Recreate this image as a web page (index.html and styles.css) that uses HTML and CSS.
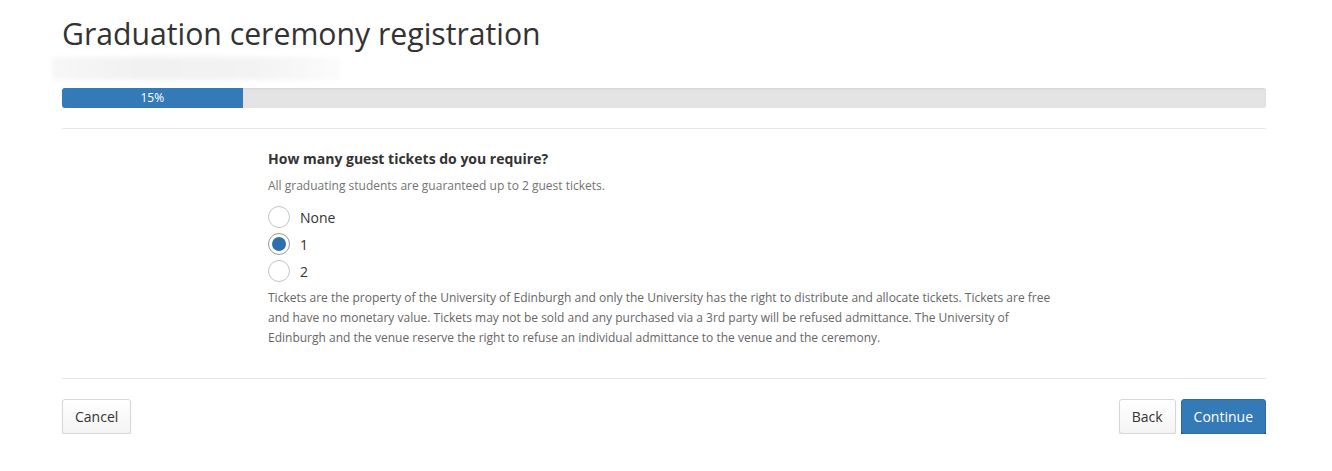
FILE: index.html
```html
<!DOCTYPE html>
<html lang="en">
<head>
<meta charset="utf-8">
<title>Graduation ceremony registration</title>
<link rel="stylesheet" href="styles.css">
</head>
<body>
<div class="page">
  <h1 class="title">Graduation ceremony registration</h1>
  <div class="redacted"></div>
  <div class="progress">
    <div class="progress-bar" style="width: 15%">15%</div>
  </div>
  <hr class="rule">
  <div class="question">
    <div class="q-label">How many guest tickets do you require?</div>
    <div class="q-help">All graduating students are guaranteed up to 2 guest tickets.</div>
    <div class="options">
      <label class="option"><span class="radio"></span><span class="opt-text">None</span></label>
      <label class="option"><span class="radio checked"></span><span class="opt-text">1</span></label>
      <label class="option"><span class="radio"></span><span class="opt-text">2</span></label>
    </div>
    <p class="note">Tickets are the property of the University of Edinburgh and only the University has the right to distribute and allocate tickets. Tickets are free and have no monetary value. Tickets may not be sold and any purchased via a 3rd party will be refused admittance. The University of Edinburgh and the venue reserve the right to refuse an individual admittance to the venue and the ceremony.</p>
  </div>
  <hr class="rule bottom">
  <div class="actions">
    <button class="btn">Cancel</button>
    <div class="right">
      <button class="btn">Back</button>
      <button class="btn primary">Continue</button>
    </div>
  </div>
</div>
</body>
</html>
```

FILE: styles.css
```css
* { box-sizing: border-box; }
html, body { margin: 0; padding: 0; background: #fff; }
body {
  font-family: "Open Sans", "Noto Sans", sans-serif;
  color: #333;
}
.page {
  width: 1204px;
  margin-left: 62px;
  padding-top: 14px;
}
.title {
  font-size: 30.2px;
  font-weight: 400;
  line-height: 40px;
  margin: 0;
  color: #333;
}
.redacted {
  width: 288px;
  height: 23px;
  margin-left: -10px;
  margin-top: 3px;
  background: linear-gradient(90deg, rgba(235,235,235,0.4), #f1f1f1 30%, #f3f3f3 70%, rgba(248,248,248,0.5));
  filter: blur(2px);
}
.progress {
  margin-top: 8px;
  height: 20px;
  background: #e4e4e4;
  border-radius: 3px;
  overflow: hidden;
  box-shadow: inset 0 1px 2px rgba(0,0,0,0.08);
}
.progress-bar {
  height: 100%;
  background: #337ab7;
  color: #fff;
  font-size: 12px;
  line-height: 20px;
  text-align: center;
}
.rule {
  border: 0;
  border-top: 1px solid #e6e6e6;
  margin: 20px 0 0;
}
.question {
  padding-left: 206px;
  padding-top: 20px;
}
.q-label {
  font-size: 14px;
  font-weight: 700;
  line-height: 20px;
  color: #333;
}
.q-help {
  margin-top: 8px;
  font-size: 12px;
  line-height: 18px;
  color: #737373;
}
.options {
  margin-top: 11px;
  display: flex;
  flex-direction: column;
  gap: 5px;
}
.option {
  display: flex;
  align-items: center;
  gap: 10px;
  height: 22px;
}
.radio {
  width: 22px;
  height: 22px;
  border-radius: 50%;
  border: 1px solid #c4c4c4;
  background: #fff;
  display: flex;
  align-items: center;
  justify-content: center;
}
.radio.checked {
  border-color: #999;
}
.radio.checked::after {
  content: "";
  width: 14px;
  height: 14px;
  border-radius: 50%;
  background: #2e6fb0;
}
.opt-text {
  font-size: 14px;
  color: #333;
}
.note {
  margin: 6px 0 0;
  width: 792px;
  font-size: 12px;
  line-height: 20px;
  color: #666;
}
.rule.bottom {
  margin-top: 30px;
}
.actions {
  margin-top: 20px;
  display: flex;
  justify-content: space-between;
  align-items: center;
}
.right { display: flex; gap: 5px; }
.btn {
  font-family: "Open Sans", "Noto Sans", sans-serif;
  font-size: 14px;
  height: 35px;
  padding: 0 12px;
  border: 1px solid #d6d6d6;
  border-radius: 3px;
  background: linear-gradient(#fff, #f4f4f4);
  color: #333;
  box-shadow: 0 2px 1px rgba(0,0,0,0.18);
}
.btn.primary {
  background: #337ab7;
  border-color: #2e6da4;
  color: #fff;
  box-shadow: 0 2px 0 #1f4f7a;
}
```
